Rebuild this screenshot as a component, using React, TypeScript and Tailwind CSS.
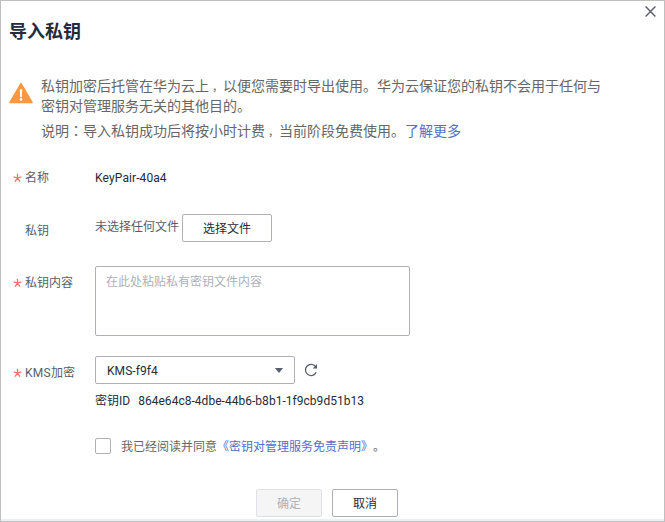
import type { ReactNode } from 'react';

function Label({ required = false, children }: { required?: boolean; children: ReactNode }) {
  return (
    <div className="flex h-4 w-[82px] shrink-0 items-center text-[#575d6c]">
      <span className="flex w-3 shrink-0">
        {required && (
          <svg width="9" height="10" viewBox="0 0 9 10" fill="none" stroke="#f66f6a" strokeWidth="1.3">
            <path d="M4.5 5V.8M4.5 5 .6 3.8M4.5 5l3.9-1.2M4.5 5 2 8.6M4.5 5 7 8.6" />
          </svg>
        )}
      </span>
      <span className="whitespace-nowrap">{children}</span>
    </div>
  );
}

function Comma() {
  return <span className="ml-[3px] inline-block w-[11px] text-[11px]">，</span>;
}

export default function App() {
  return (
    <div className="flex h-[522px] w-[665px] flex-col border border-[#bfbfbf] bg-white font-['Roboto','Noto_Sans_CJK_SC',sans-serif] text-[12px] leading-4 text-[#252b3a] [font-kerning:none]">
      <header className="flex h-[76px] shrink-0 justify-between pl-2">
        <h1 className="mt-[18px] text-[18px] leading-[26px] font-bold">导入私钥</h1>
        <button aria-label="关闭" className="mt-[5px] mr-[8px] h-[11px] w-[11px]">
          <svg width="11" height="11" viewBox="0 0 11 11" stroke="#575d6c" strokeWidth="1.4">
            <path d="M.6.6l9.8 9.8M10.4.6.6 10.4" />
          </svg>
        </button>
      </header>

      <section className="flex h-[69px] shrink-0 pl-2 text-[14px] text-[#666]">
        <svg className="mt-[5px] mr-2 shrink-0" width="24" height="22" viewBox="0 0 24 22">
          <path d="M12 1.6 23 20.4H1Z" fill="#fa9841" stroke="#fa9841" strokeWidth="1.6" strokeLinejoin="round" />
          <path d="M10.8 7.2h2.4l-.4 8h-1.6Z" fill="#fff" />
          <circle cx="12" cy="17.4" r="1.3" fill="#fff" />
        </svg>
        <div className="whitespace-nowrap">
          <p className="h-5 leading-[18px]">私钥加密后托管在华为云上<Comma />以便您需要时导出使用。华为云保证您的私钥不会用于任何与</p>
          <p className="h-6 leading-[18px]">密钥对管理服务无关的其他目的。</p>
          <p className="leading-[18px]">
            说明<span className="font-['Noto_Sans_CJK_TC',sans-serif]">：</span>导入私钥成功后将按小时计费<Comma />当前阶段免费使用。
            <a className="text-[#526ecc]">了解更多</a>
          </p>
        </div>
      </section>

      <div className="flex h-[68px] shrink-0 items-start pt-6 pl-3">
        <Label required>名称</Label>
        <span className="tracking-[0.08px]">KeyPair-40a4</span>
      </div>

      <div className="flex h-[52px] shrink-0 items-start pl-3">
        <div className="pt-[9px]"><Label>私钥</Label></div>
        <span className="mt-[5px] mr-[3px] text-[#575d6c]">未选择任何文件</span>
        <button className="h-7 w-[90px] rounded-[2px] border border-[#adb0b8] pt-px">选择文件</button>
      </div>

      <div className="flex h-[90px] shrink-0 items-start pl-3">
        <div className="pt-[9px]"><Label required>私钥内容</Label></div>
        <textarea
          className="h-[70px] w-[315px] resize-none rounded-[2px] border border-[#adb0b8] px-[10px] py-[7px] outline-none placeholder:text-[#adb0b8]"
          placeholder="在此处粘贴私有密钥文件内容"
        />
      </div>

      <div className="flex h-[37px] shrink-0 items-start pl-3">
        <div className="pt-[9px]"><Label required><span className="tracking-[0.3px]">KMS</span>加密</Label></div>
        <button className="flex h-7 w-[200px] items-center justify-between rounded-[2px] border border-[#adb0b8] pr-[11px] pl-[11px]">
          <span className="pt-px tracking-[0.08px]">KMS-f9f4</span>
          <svg width="8" height="5" viewBox="0 0 8 5" fill="#575d6c"><path d="M0 0h8L4 5Z" /></svg>
        </button>
        <svg className="mt-[7px] ml-[9px]" width="14" height="14" viewBox="0 0 14 14" fill="none" stroke="#575d6c" strokeWidth="1.3">
          <path d="M11.6 3.6A5.6 5.6 0 1 0 12.2 9.2" />
          <path d="M13 1v4.4H8.8Z" fill="#575d6c" stroke="none" />
        </svg>
      </div>

      <div className="flex h-[45px] shrink-0 items-start pl-[94px]">
        <span className="mr-2">密钥ID</span>
        <span className="tracking-[0.03px]">864e64c8-4dbe-44b6-b8b1-1f9cb9d51b13</span>
      </div>

      <label className="flex h-[51px] shrink-0 items-start pl-[94px] text-[#666]">
        <span className="mr-[10px] h-4 w-4 rounded-[2px] border border-[#adb0b8]" />
        <span className="pt-px">我已经阅读并同意<a className="text-[#526ecc]">《密钥对管理服务免责声明》</a><span className="inline-block">。</span></span>
      </label>

      <footer className="flex flex-1 items-start justify-center gap-[10px] border-b-2 border-[#ebeff7] pr-[11px]">
        <button className="h-7 w-[66px] rounded-[2px] border border-[#dfe1e6] bg-[#f5f5f6] pt-px text-[#adb0b8]">确定</button>
        <button className="h-7 w-[66px] rounded-[2px] border border-[#adb0b8] pt-px">取消</button>
      </footer>
    </div>
  );
}
